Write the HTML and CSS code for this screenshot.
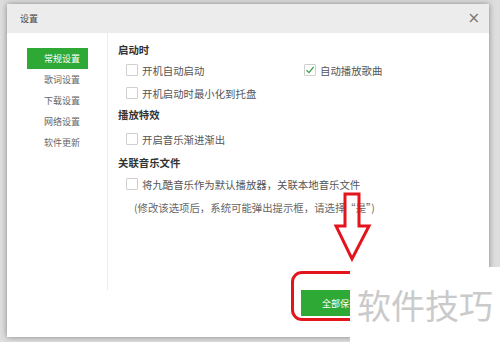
FILE: index.html
```html
<!DOCTYPE html>
<html>
<head>
	<meta charset="utf-8">
	<title>设置</title>
	<link rel="stylesheet" href="styles.css">
</head>
<body>
	<div class="dialog">
		<div class="titlebar">
			<span class="title">设置</span>
			<span class="close">×</span>
		</div>
		<div class="main">
			<nav class="sidebar">
				<a class="tab active">常规设置</a>
				<a class="tab">歌词设置</a>
				<a class="tab">下载设置</a>
				<a class="tab">网络设置</a>
				<a class="tab">软件更新</a>
			</nav>
			<div class="content">
				<h3>启动时</h3>
				<div class="grid">
					<label class="opt"><span class="box"></span>开机自动启动</label>
					<label class="opt"><span class="box"><svg width="10" height="10" viewBox="0 0 10 10"><path d="M1.5 5.2 L4 7.6 L8.6 1.8" fill="none" stroke="#35a53b" stroke-width="1.3"/></svg></span>自动播放歌曲</label>
				</div>
				<label class="opt second"><span class="box"></span>开机启动时最小化到托盘</label>

				<h3 class="sec2">播放特效</h3>
				<label class="opt after-sec2"><span class="box"></span>开启音乐渐进渐出</label>

				<h3 class="sec3">关联音乐文件</h3>
				<label class="opt after-sec3"><span class="box"></span>将九酷音乐作为默认播放器，关联本地音乐文件</label>
				<p class="note">(修改该选项后，系统可能弹出提示框，请选择“是”)</p>
			</div>
		</div>
		<div class="footer">
			<button class="btn save">全部保存</button>
		</div>
	</div>

	<div class="mark-box"></div>
	<svg class="arrow" width="40" height="72" viewBox="0 0 40 72">
		<path d="M11 2 H25 V34 H35 L18 67 L2 34 H11 Z" fill="none" stroke="#e3141c" stroke-width="3" stroke-linejoin="miter"/>
	</svg>
	<div class="watermark">软件技巧</div>
</body>
</html>
```

FILE: styles.css
```css
* {
	box-sizing: border-box;
}
body {
	margin: 0;
	padding: 4px 11px 5px 7px;
	width: 500px;
	height: 342px;
	overflow: hidden;
	background-color: #dedede;
	font-family: "Noto Sans CJK SC", "Noto Sans", sans-serif;
	position: relative;
}
.dialog {
	width: 482px;
	height: 333px;
	background-color: white;
	box-shadow: 0 0 6px rgba(0, 0, 0, 0.4);
	display: flex;
	flex-direction: column;
}
.titlebar {
	height: 29px;
	background-color: #ececec;
	display: flex;
	align-items: center;
	justify-content: space-between;
	padding: 0 9px 0 13px;
}
.title {
	font-size: 9px;
	color: #444;
}
.close {
	font-family: "DejaVu Sans", sans-serif;
	font-size: 15px;
	color: #777;
	line-height: 1;
}
.main {
	display: flex;
	height: 257px;
}
.sidebar {
	width: 101px;
	border-right: 1px solid #ececec;
	padding: 15px 0 0 20px;
	display: flex;
	flex-direction: column;
}
.tab {
	width: 61px;
	height: 21px;
	line-height: 21px;
	font-size: 9px;
	color: #666;
	text-align: right;
	padding-right: 8px;
}
.tab.active {
	background-color: #2fa935;
	color: white;
}
.content {
	padding: 7px 0 0 10px;
	font-size: 10.4px;
	color: #555;
}
h3 {
	margin: 0;
	height: 20px;
	line-height: 20px;
	font-size: 10.4px;
	font-weight: bold;
	color: #333;
}
.grid {
	display: grid;
	grid-template-columns: 186px auto;
}
.opt {
	display: flex;
	align-items: center;
	height: 20px;
	padding-left: 8px;
	white-space: nowrap;
}
.grid .opt + .opt {
	padding-left: 0;
}
.box {
	width: 12px;
	height: 12px;
	border: 1px solid #cfcfcf;
	border-radius: 1px;
	margin-right: 4px;
	display: inline-flex;
	align-items: center;
	justify-content: center;
}
.second {
	margin-top: 3px;
}
.sec2 {
	margin-top: 2px;
}
.after-sec2 {
	margin-top: 4px;
}
.sec3 {
	margin-top: 4px;
}
.after-sec3 {
	margin-top: 1px;
}
.note {
	margin: 4px 0 0 16px;
	height: 20px;
	line-height: 20px;
	color: #666;
	white-space: nowrap;
}
.footer {
	display: flex;
	padding-left: 294px;
}
.btn {
	width: 78px;
	height: 26px;
	font-family: inherit;
	font-size: 9px;
	border: none;
	padding: 0;
}
.save {
	background-color: #2fa935;
	color: white;
}
.mark-box {
	position: absolute;
	left: 291px;
	top: 271px;
	width: 110px;
	height: 50px;
	border: 3px solid #e3141c;
	border-radius: 11px;
}
.arrow {
	position: absolute;
	left: 334px;
	top: 192px;
}
.watermark {
	position: absolute;
	left: 350px;
	top: 267px;
	width: 150px;
	height: 75px;
	background-color: white;
	color: #cacaca;
	font-size: 34px;
	line-height: 75px;
	padding-left: 7px;
}
```
